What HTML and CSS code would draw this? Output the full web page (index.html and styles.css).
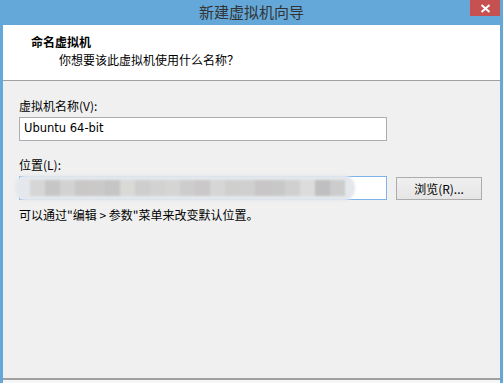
FILE: index.html
```html
<!DOCTYPE html>
<html>
<head>
<meta charset="utf-8">
<title>新建虚拟机向导</title>
<link rel="stylesheet" href="styles.css">
</head>
<body>
<div class="window">
  <div class="titlebar">
    <span class="title">新建虚拟机向导</span>
    <div class="close-button">
      <svg width="11" height="9" viewBox="0 0 11 9"><path d="M1.5 1 L9.5 8 M9.5 1 L1.5 8" stroke="#fff" stroke-width="2"/></svg>
    </div>
  </div>
  <div class="client">
    <div class="header">
      <div class="header-title">命名虚拟机</div>
      <div class="header-sub">你想要该此虚拟机使用什么名称？</div>
    </div>
    <div class="content">
      <label class="field-label">虚拟机名称(V):</label>
      <div class="textbox">Ubuntu 64-bit</div>
      <label class="field-label second">位置(L):</label>
      <div class="path-row">
        <div class="textbox focused">
          <div class="mosaic" id="mosaic"></div>
        </div>
        <div class="button">浏览(R)...</div>
      </div>
      <div class="hint">可以通过"编辑 &gt; 参数"菜单来改变默认位置。</div>
    </div>
    <div class="footer-rule"></div>
  </div>
</div>
<script>
// blurred path: a row of grey squares
const shades = ['#d6d6d6', '#c6c6c6', '#d2d2d2', '#cac8c7', '#c9c9c9', '#c5c5c5', '#d9d9d6',
  '#cecece', '#d2d2d2', '#d5d6d4', '#cdcdcd', '#cac8c8', '#d6d6d6', '#cfcfce', '#d0d0d0',
  '#c8c6c6', '#c8c8c8', '#d0d0d0', '#dcdcdc', '#bfbfc1', '#cccccc'];
const mosaic = document.getElementById('mosaic');
shades.forEach(c => {
  const cell = document.createElement('span');
  cell.className = 'cell';
  cell.style.backgroundColor = c;
  mosaic.appendChild(cell);
});
</script>
</body>
</html>
```

FILE: styles.css
```css
body {
  margin: 0;
  background-color: #64a8d9;
  font-family: "Noto Sans CJK SC", "Liberation Sans", sans-serif;
  font-size: 12px;
  color: #000;
}

.window {
  width: 503px;
  height: 383px;
  display: flex;
  flex-direction: column;
}

.titlebar {
  position: relative;
  height: 25px;
  display: flex;
  justify-content: center;
  align-items: center;
}

.title {
  font-size: 15px;
  color: #333;
  line-height: 20px;
  margin-top: -2px;
}

.close-button {
  position: absolute;
  top: 0;
  right: 3px;
  width: 30px;
  height: 16px;
  background-color: #c75050;
  display: flex;
  justify-content: center;
  align-items: center;
}

.client {
  flex: 1;
  margin: 0 3px;
  background-color: #f0f0f0;
  display: flex;
  flex-direction: column;
}

.header {
  height: 56px;
  box-sizing: border-box;
  background-color: #fff;
  border-bottom: 1px solid #a0a0a0;
  padding: 9px 0 0 28px;
}

.header-title {
  font-weight: bold;
  line-height: 16px;
}

.header-sub {
  margin: 2px 0 0 28px;
  line-height: 16px;
}

.content {
  flex: 1;
  padding: 17px 0 0 16px;
  display: flex;
  flex-direction: column;
  align-items: flex-start;
}

.field-label {
  line-height: 16px;
}

.field-label.second {
  margin-top: 16px;
}

.textbox {
  position: relative;
  margin-top: 3px;
  width: 368px;
  height: 24px;
  box-sizing: border-box;
  border: 1px solid #abadb3;
  background-color: #fff;
  padding-left: 4px;
  line-height: 21px;
  font-family: "DejaVu Sans", "Noto Sans CJK SC", sans-serif;
  font-size: 11.5px;
}

.textbox.focused {
  border-color: #7eb4ea;
}

.mosaic {
  position: absolute;
  left: -5px;
  top: -2px;
  height: 26px;
  padding: 0 10px 0 15px;
  background-color: #e4e8ec;
  border-radius: 12px;
  filter: blur(0.8px);
  display: flex;
  align-items: center;
}

.cell {
  width: 15px;
  height: 16px;
}

.path-row {
  display: flex;
  align-items: flex-start;
  gap: 9px;
}

.button {
  margin-top: 4px;
  width: 86px;
  height: 23px;
  box-sizing: border-box;
  border: 1px solid #acacac;
  background: linear-gradient(#f0f0f0, #e5e5e5);
  display: flex;
  justify-content: center;
  align-items: center;
}

.hint {
  margin-top: 7px;
  line-height: 16px;
}

.footer-rule {
  height: 3px;
  border-top: 2px solid #a0a0a0;
  background-color: #f6f6f6;
}
```
